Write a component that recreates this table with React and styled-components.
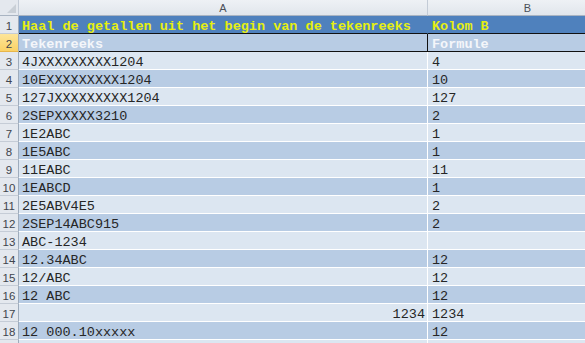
import React from "react";
import styled, { createGlobalStyle } from "styled-components";

const Global = createGlobalStyle`
  html, body { margin: 0; padding: 0; background: #ffffff; overflow: hidden; }
  #root { width: 585px; height: 343px; overflow: hidden; }
`;

const Sheet = styled.div`
  display: grid;
  grid-template-columns: 19px 409px 200px;
  grid-auto-rows: 18px;
  grid-template-rows: 16px;
  width: 628px;
  font-family: "Liberation Mono", "Courier New", monospace;
`;

const Corner = styled.div`
  position: relative;
  background: #e4e8ee;
  border-right: 1px solid #c3cbd6;
  border-bottom: 1px solid #a9b4c2;
  box-sizing: border-box;
  &::after {
    content: "";
    position: absolute;
    right: 2px;
    bottom: 2px;
    width: 0;
    height: 0;
    border-left: 9px solid transparent;
    border-bottom: 9px solid #c9cfd6;
  }
`;

const ColHead = styled.div`
  background: linear-gradient(#eef1f5, #e1e6ec);
  border-right: 1px solid #c3cbd6;
  border-bottom: 1px solid #a9b4c2;
  box-sizing: border-box;
  display: flex;
  align-items: center;
  justify-content: center;
  padding-top: 1px;
  font-family: "Liberation Sans", Arial, sans-serif;
  font-size: 11px;
  color: #4a4f57;
`;

const RowHead = styled.div`
  background: ${(p) => (p.$sel ? "linear-gradient(#fde59a, #fbd266)" : "#e4e8ee")};
  border-right: 1px solid #9eabbb;
  border-bottom: 1px solid ${(p) => (p.$sel ? "#e8b64a" : "#c5ccd6")};
  box-sizing: border-box;
  display: flex;
  align-items: center;
  justify-content: center;
  padding-top: 2px;
  font-family: "Liberation Sans", Arial, sans-serif;
  font-size: 11.5px;
  color: #3f454d;
`;

const Cell = styled.div`
  box-sizing: border-box;
  background: ${(p) => p.$bg};
  color: ${(p) => p.$fg};
  font-weight: ${(p) => (p.$bold ? 700 : 400)};
  border-bottom: 1px solid ${(p) => p.$line};
  border-right: 1px solid ${(p) => p.$vline};
  font-size: 13.5px;
  line-height: 17px;
  white-space: nowrap;
  overflow: hidden;
  padding: 2px ${(p) => (p.$right ? "2px" : "3px")} 0 ${(p) => (p.$colB ? "4px" : "3px")};
  text-align: ${(p) => (p.$right ? "right" : "left")};
`;

const data = [
  ["4JXXXXXXXXX1204", "4"],
  ["10EXXXXXXXXX1204", "10"],
  ["127JXXXXXXXXX1204", "127"],
  ["2SEPXXXXX3210", "2"],
  ["1E2ABC", "1"],
  ["1E5ABC", "1"],
  ["11EABC", "11"],
  ["1EABCD", "1"],
  ["2E5ABV4E5", "2"],
  ["2SEP14ABC915", "2"],
  ["ABC-1234", ""],
  ["12.34ABC", "12"],
  ["12/ABC", "12"],
  ["12 ABC", "12"],
  ["1234", "1234", true],
  ["12 000.10xxxxx", "12"],
  ["", ""],
];

export default function App() {
  return (
    <>
      <Global />
      <Sheet>
        <Corner />
        <ColHead>A</ColHead>
        <ColHead>B</ColHead>

        <RowHead>1</RowHead>
        <Cell $bg="#4f81bd" $fg="#e6ef10" $bold $line="#111" $vline="#4f81bd">
          Haal de getallen uit het begin van de tekenreeks
        </Cell>
        <Cell $bg="#4f81bd" $fg="#e6ef10" $bold $line="#111" $vline="#4f81bd" $colB>
          Kolom B
        </Cell>

        <RowHead $sel>2</RowHead>
        <Cell $bg="#b8cce4" $fg="#f4f6fa" $bold $line="#111" $vline="#111">
          Tekenreeks
        </Cell>
        <Cell $bg="#b8cce4" $fg="#f4f6fa" $bold $line="#111" $vline="#b8cce4" $colB>
          Formule
        </Cell>

        {data.map(([a, b, right], i) => {
          const n = i + 3;
          const bg = n % 2 === 1 ? "#dce6f1" : "#b8cce4";
          return (
            <React.Fragment key={n}>
              <RowHead>{n < 19 ? n : ""}</RowHead>
              <Cell $bg={bg} $fg="#262626" $line="#ffffff" $vline="#ffffff" $right={right}>
                {a}
              </Cell>
              <Cell $bg={bg} $fg="#262626" $line="#ffffff" $vline={bg} $colB>
                {b}
              </Cell>
            </React.Fragment>
          );
        })}
      </Sheet>
    </>
  );
}
